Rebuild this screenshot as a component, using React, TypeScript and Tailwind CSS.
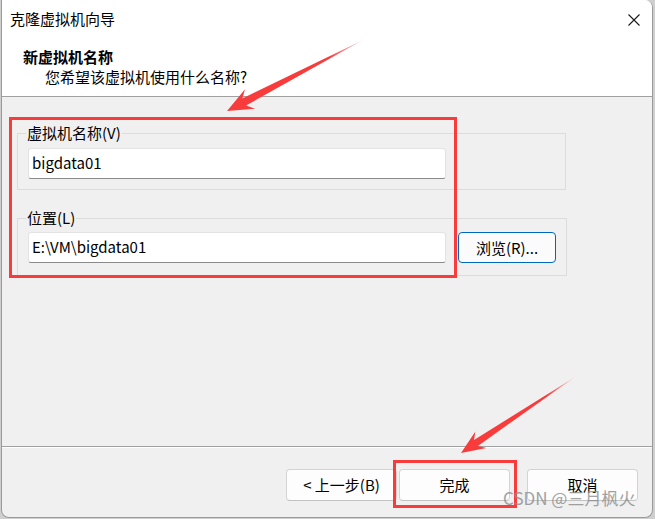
import React from "react";

type Pt = [number, number];

function arrowPoints(tail: Pt, tip: Pt, headLen: number, headHalf: number, shaftHalf: number): string {
  const dx = tip[0] - tail[0];
  const dy = tip[1] - tail[1];
  const len = Math.hypot(dx, dy);
  const ux = dx / len;
  const uy = dy / len;
  const nx = uy;
  const ny = -ux;
  const at = (back: number, side: number): Pt => [tip[0] - ux * back + nx * side, tip[1] - uy * back + ny * side];
  const pts: Pt[] = [
    tail,
    at(headLen * 0.75, shaftHalf),
    at(headLen, headHalf),
    tip,
    at(headLen, -headHalf),
    at(headLen * 0.75, -shaftHalf),
  ];
  return pts.map((p) => `${p[0].toFixed(1)},${p[1].toFixed(1)}`).join(" ");
}

const font = { fontFamily: '"Noto Sans CJK SC", "Noto Sans", sans-serif' };

function Button({ label, width }: { label: string; width: string }) {
  return (
    <button
      className={`${width} h-[32px] rounded-[4px] border border-[#d3d3d3] border-b-[#c2c2c2] bg-[#fdfdfd] text-[15px] leading-[20px] text-black`}
    >
      {label}
    </button>
  );
}

export default function App() {
  return (
    <div className="relative w-[655px] h-[519px] bg-[#cfcfcf] overflow-hidden" style={font}>
      <div className="ml-[1px] w-[652px] h-[518px] flex flex-col border border-t-0 border-[#9a9a9a] rounded-tr-[8px] rounded-b-[8px] overflow-hidden bg-[#f0f0f0]">
        {/* Header */}
        <div className="h-[97px] bg-white border-b border-[#a0a0a0] shrink-0">
          <div className="flex items-center justify-between pt-[9px] pl-[8px] pr-[12px]">
            <span className="text-[15px] leading-[20px] text-black">克隆虚拟机向导</span>
            <svg width="12" height="12" viewBox="0 0 12 12" className="mt-[1px]">
              <path d="M0.5 0.5 L11.5 11.5 M11.5 0.5 L0.5 11.5" stroke="#1a1a1a" strokeWidth="1.1" />
            </svg>
          </div>
          <div className="mt-[18px] pl-[21px] text-[15px] leading-[20px] font-bold text-black">新虚拟机名称</div>
          <div className="pl-[43px] text-[15px] leading-[20px] text-black">您希望该虚拟机使用什么名称?</div>
        </div>

        {/* Body */}
        <div className="h-[349px] shrink-0 pt-[26px] pl-[15px]">
          <fieldset className="w-[549px] border border-[#dcdcdc] px-[10px] pb-[10px]">
            <legend className="ml-[-2px] px-[1px] text-[15px] leading-[20px] text-black">虚拟机名称(V)</legend>
            <input
              readOnly
              value="bigdata01"
              className="mt-[5px] block w-[418px] h-[31px] bg-white border border-[#e3e3e3] border-b-[#8a8a8a] rounded-[3px] pl-[3px] pb-[3px] text-[15px] text-black outline-none"
            />
          </fieldset>
          <fieldset className="mt-[18px] w-[549px] border border-[#dcdcdc] px-[10px] pb-[12px]">
            <legend className="ml-[-2px] px-[1px] text-[15px] leading-[20px] text-black">位置(L)</legend>
            <div className="mt-[4px] flex items-center">
              <input
                readOnly
                value="E:\VM\bigdata01"
                className="block w-[418px] h-[31px] bg-white border border-[#e3e3e3] border-b-[#8a8a8a] rounded-[3px] pl-[3px] pb-[3px] text-[15px] text-black outline-none"
              />
              <button className="ml-[12px] w-[98px] h-[31px] rounded-[4px] border border-[#0067c0] bg-[#fbfbfb] text-[15px] leading-[20px] text-black">
                浏览(R)...
              </button>
            </div>
          </fieldset>
        </div>

        {/* Footer */}
        <div className="flex-1 border-t border-[#a0a0a0]">
          <div className="h-px bg-white" />
          <div className="flex justify-end pt-[21px] pr-[14px]">
            <Button label="< 上一步(B)" width="w-[111px]" />
            <div className="ml-[2px]">
              <Button label="完成" width="w-[111px]" />
            </div>
            <div className="ml-[17px]">
              <Button label="取消" width="w-[111px]" />
            </div>
          </div>
        </div>
      </div>

      {/* Annotations */}
      <div className="absolute left-[9px] top-[117px] w-[448px] h-[161px] border-[3px] border-[#f83c3c] pointer-events-none" />
      <div className="absolute left-[393px] top-[460px] w-[124px] h-[48px] border-[3px] border-[#f83c3c] pointer-events-none" />
      <svg className="absolute left-0 top-0 pointer-events-none" width="655" height="519" viewBox="0 0 655 519">
        <defs>
          <linearGradient id="g1" x1="363" y1="40" x2="227" y2="111" gradientUnits="userSpaceOnUse">
            <stop offset="0" stopColor="#f83c3c" stopOpacity="0.2" />
            <stop offset="0.25" stopColor="#f83c3c" />
            <stop offset="1" stopColor="#f83c3c" />
          </linearGradient>
          <linearGradient id="g2" x1="575" y1="377" x2="461" y2="453" gradientUnits="userSpaceOnUse">
            <stop offset="0" stopColor="#f83c3c" stopOpacity="0.2" />
            <stop offset="0.25" stopColor="#f83c3c" />
            <stop offset="1" stopColor="#f83c3c" />
          </linearGradient>
        </defs>
        <polygon points={arrowPoints([363, 40], [227, 111], 26, 11, 4)} fill="url(#g1)" />
        <polygon points={arrowPoints([575, 377], [461, 453], 24, 10, 3.5)} fill="url(#g2)" />
      </svg>
      <div
        className="absolute left-[503px] top-[487px] text-[17px] leading-[22px] text-[#8c8c8c] opacity-80 pointer-events-none whitespace-nowrap"
        style={{ fontFamily: '"Noto Sans CJK SC", sans-serif' }}
      >
        CSDN @三月枫火
      </div>
    </div>
  );
}
